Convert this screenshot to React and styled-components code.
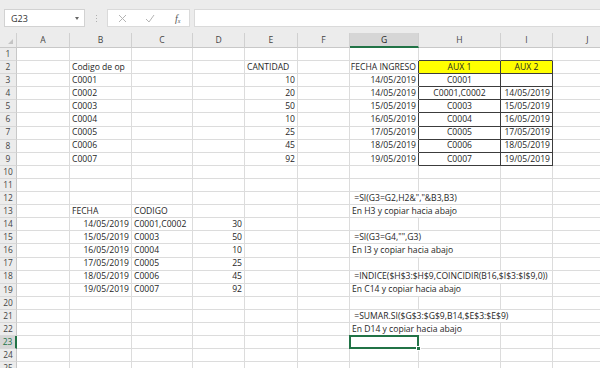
import React from "react";
import styled, { createGlobalStyle, css } from "styled-components";

const Global = createGlobalStyle`
  html, body { margin: 0; padding: 0; background: #ffffff; overflow: hidden; }
  body { font-family: "Open Sans", "Liberation Sans", sans-serif; }
`;

const COLS = [
  { k: "A", w: 53 }, { k: "B", w: 62 }, { k: "C", w: 61 }, { k: "D", w: 52 },
  { k: "E", w: 53 }, { k: "F", w: 52 }, { k: "G", w: 69 }, { k: "H", w: 82 },
  { k: "I", w: 52 }, { k: "J", w: 70 },
];
const ROWS = 25;
const GREEN = "#217346";
const DARK = "#3c3c3c";

const Page = styled.div`
  width: 600px;
  height: 368px;
  overflow: hidden;
  display: flex;
  flex-direction: column;
`;

const Toolbar = styled.div`
  height: 33px;
  flex: none;
  background: #ececec;
  display: flex;
  align-items: flex-start;
  padding: 9px 0 0 4px;
  box-sizing: border-box;
`;

const NameBox = styled.div`
  width: 81px;
  height: 18px;
  box-sizing: border-box;
  background: #fff;
  border: 1px solid #d2d2d2;
  display: flex;
  align-items: center;
  justify-content: space-between;
  padding: 0 5px 0 6px;
  font-size: 9px;
  color: #333;
`;

const Caret = styled.span`
  width: 0;
  height: 0;
  border-left: 2.5px solid transparent;
  border-right: 2.5px solid transparent;
  border-top: 3px solid #666;
`;

const Grip = styled.div`
  width: 22px;
  height: 18px;
  display: flex;
  flex-direction: column;
  align-items: center;
  justify-content: center;
  gap: 2px;
`;

const GripDot = styled.span`
  width: 1px;
  height: 1px;
  background: #b0b0b0;
`;

const FxBox = styled.div`
  width: 83px;
  height: 18px;
  box-sizing: border-box;
  background: #fff;
  border: 1px solid #dadada;
  display: flex;
  align-items: center;
  padding-left: 10px;
  gap: 18px;
`;

const FxLabel = styled.span`
  font-family: "Liberation Serif", serif;
  font-style: italic;
  font-size: 10px;
  color: #555;
  margin-left: 2px;
  & > sub {
    font-size: 6px;
    vertical-align: -1px;
  }
`;

const FormulaInput = styled.div`
  flex: 1;
  height: 18px;
  margin-left: 4px;
  box-sizing: border-box;
  background: #fff;
  border: 1px solid #dadada;
  border-right: none;
`;

const Sheet = styled.div`
  display: grid;
  grid-template-columns: 17px ${COLS.map((c) => c.w + "px").join(" ")};
  grid-template-rows: 15px repeat(${ROWS}, 13.1px);
  font-size: 8.6px;
  color: #262626;
`;

const Corner = styled.div`
  background: #ececec;
  border-right: 1px solid #d0d0d0;
  border-bottom: 1px solid #c8c8c8;
  box-sizing: border-box;
  position: relative;
  &::after {
    content: "";
    position: absolute;
    right: 3px;
    bottom: 3px;
    width: 0;
    height: 0;
    border-left: 5px solid transparent;
    border-bottom: 5px solid #c4c4c4;
  }
`;

const ColHead = styled.div`
  background: ${(p) => (p.$active ? "#d6d6d6" : "#ececec")};
  border-right: 1px solid #d0d0d0;
  border-bottom: ${(p) => (p.$active ? `2px solid ${GREEN}` : "1px solid #c8c8c8")};
  box-sizing: border-box;
  display: flex;
  align-items: center;
  justify-content: center;
  font-size: 8.6px;
  color: ${(p) => (p.$active ? "#222" : "#444")};
`;

const RowHead = styled.div`
  background: ${(p) => (p.$active ? "#d6d6d6" : "#ececec")};
  border-bottom: 1px solid #d8d8d8;
  border-right: ${(p) => (p.$active ? `2px solid ${GREEN}` : "1px solid #c8c8c8")};
  box-sizing: border-box;
  display: flex;
  align-items: center;
  justify-content: center;
  font-size: 8.4px;
  color: ${(p) => (p.$active ? GREEN : "#444")};
  line-height: 1;
`;

const Cell = styled.div`
  grid-column: span ${(p) => p.$span || 1};
  box-sizing: border-box;
  border-right: 1px solid ${(p) => (p.$rb ? DARK : "#dcdcdc")};
  border-bottom: 1px solid ${(p) => (p.$bb ? DARK : "#dcdcdc")};
  background: ${(p) => p.$fill || "transparent"};
  padding: 0 2px;
  display: flex;
  align-items: center;
  justify-content: ${(p) =>
    p.$align === "right" ? "flex-end" : p.$align === "center" ? "center" : "flex-start"};
  white-space: pre;
  line-height: 1;
  min-width: 0;
  ${(p) =>
    p.$selected &&
    css`
      position: relative;
      &::after {
        content: "";
        position: absolute;
        left: -1px;
        top: -1px;
        right: -1px;
        bottom: -1px;
        border: 2px solid ${GREEN};
      }
      &::before {
        content: "";
        position: absolute;
        right: -3px;
        bottom: -3px;
        width: 5px;
        height: 5px;
        background: ${GREEN};
        border: 1px solid #fff;
        box-sizing: border-box;
        z-index: 2;
      }
    `}
`;

const dates = ["14/05/2019", "14/05/2019", "15/05/2019", "16/05/2019", "17/05/2019", "18/05/2019", "19/05/2019"];
const auxDates = ["", "14/05/2019", "15/05/2019", "16/05/2019", "17/05/2019", "18/05/2019", "19/05/2019"];
const aux1 = ["C0001", "C0001,C0002", "C0003", "C0004", "C0005", "C0006", "C0007"];
const qty = [10, 20, 50, 10, 25, 45, 92];

const data = {};
const put = (r, c, v, opts = {}) => {
  data[r] = data[r] || {};
  data[r][c] = { v, ...opts };
};

put(1, "H", "", { bb: true });
put(1, "I", "", { bb: true });
put(2, "B", "Codigo de op");
put(2, "E", "CANTIDAD");
put(2, "G", "FECHA INGRESO", { align: "right", rb: true });
put(2, "H", "AUX 1", { align: "center", fill: "#ffff00", rb: true, bb: true });
put(2, "I", "AUX 2", { align: "center", fill: "#ffff00", rb: true, bb: true });
for (let i = 0; i < 7; i++) {
  const r = 3 + i;
  put(r, "B", "C000" + (i + 1));
  put(r, "E", String(qty[i]), { align: "right" });
  put(r, "G", dates[i], { align: "right", rb: true });
  put(r, "H", aux1[i], { align: "center", rb: true, bb: true });
  put(r, "I", auxDates[i], { align: "right", rb: true, bb: true });
}
put(12, "G", ' =SI(G3=G2,H2&","&B3,B3)', { span: 2 });
put(13, "B", "FECHA");
put(13, "C", "CODIGO");
put(13, "G", "En H3 y copiar hacia abajo", { span: 2 });
const d2 = dates.slice(1);
const c2 = ["C0001,C0002", "C0003", "C0004", "C0005", "C0006", "C0007"];
const q2 = [30, 50, 10, 25, 45, 92];
for (let i = 0; i < 6; i++) {
  const r = 14 + i;
  put(r, "B", d2[i], { align: "right" });
  put(r, "C", c2[i]);
  put(r, "D", String(q2[i]), { align: "right" });
}
put(15, "G", ' =SI(G3=G4,"",G3)', { span: 2 });
put(16, "G", "En I3 y copiar hacia abajo", { span: 2 });
put(18, "G", " =INDICE($H$3:$H$9,COINCIDIR(B16,$I$3:$I$9,0))", { span: 3 });
put(19, "G", "En C14 y copiar hacia abajo", { span: 2 });
put(21, "G", " =SUMAR.SI($G$3:$G$9,B14,$E$3:$E$9)", { span: 3 });
put(22, "G", "En D14 y copiar hacia abajo", { span: 2 });
put(23, "G", "", { selected: true });

const XIcon = () => (
  <svg width="9" height="9" viewBox="0 0 9 9">
    <path d="M1 1 L8 8 M8 1 L1 8" stroke="#b4b4b4" strokeWidth="1" fill="none" />
  </svg>
);
const CheckIcon = () => (
  <svg width="10" height="9" viewBox="0 0 10 9">
    <path d="M1 5 L4 8 L9 1" stroke="#b4b4b4" strokeWidth="1" fill="none" />
  </svg>
);

function renderRow(r) {
  const out = [
    <RowHead key={`h${r}`} $active={r === 23}>
      {r}
    </RowHead>,
  ];
  let skip = 0;
  COLS.forEach((col) => {
    if (skip > 0) {
      skip--;
      return;
    }
    const d = (data[r] && data[r][col.k]) || {};
    if (d.span) skip = d.span - 1;
    out.push(
      <Cell
        key={`${col.k}${r}`}
        $span={d.span}
        $align={d.align}
        $fill={d.fill}
        $rb={d.rb}
        $bb={d.bb}
        $selected={d.selected}
      >
        {d.v}
      </Cell>
    );
  });
  return out;
}

export default function App() {
  return (
    <>
      <Global />
      <Page>
        <Toolbar>
          <NameBox>
            <span>G23</span>
            <Caret />
          </NameBox>
          <Grip>
            <GripDot />
            <GripDot />
            <GripDot />
          </Grip>
          <FxBox>
            <XIcon />
            <CheckIcon />
            <FxLabel>
              f<sub>x</sub>
            </FxLabel>
          </FxBox>
          <FormulaInput />
        </Toolbar>
        <Sheet>
          <Corner />
          {COLS.map((c) => (
            <ColHead key={c.k} $active={c.k === "G"}>
              {c.k}
            </ColHead>
          ))}
          {Array.from({ length: ROWS }, (_, i) => renderRow(i + 1))}
        </Sheet>
      </Page>
    </>
  );
}
